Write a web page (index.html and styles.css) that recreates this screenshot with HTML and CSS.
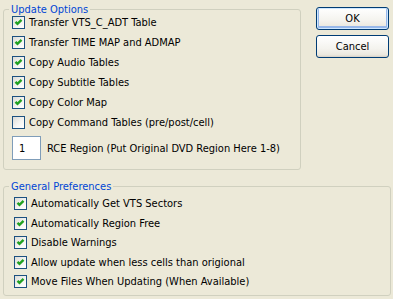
FILE: index.html
```html
<!DOCTYPE html>
<html lang="en">
<head>
  <meta charset="UTF-8">
  <title>Update Options</title>
  <link rel="stylesheet" href="styles.css">
</head>
<body>
  <div class="top">
    <!-- Update options -->
    <fieldset class="group update">
      <legend>Update Options</legend>
      <label class="row"><span class="box on"><svg viewBox="0 0 11 11" width="11" height="11"><path d="M2.5 4.8 L4.5 6.8 L8.5 2.8" /></svg></span>Transfer VTS_C_ADT Table</label>
      <label class="row"><span class="box on"><svg viewBox="0 0 11 11" width="11" height="11"><path d="M2.5 4.8 L4.5 6.8 L8.5 2.8" /></svg></span>Transfer TIME MAP and ADMAP</label>
      <label class="row"><span class="box on"><svg viewBox="0 0 11 11" width="11" height="11"><path d="M2.5 4.8 L4.5 6.8 L8.5 2.8" /></svg></span>Copy Audio Tables</label>
      <label class="row"><span class="box on"><svg viewBox="0 0 11 11" width="11" height="11"><path d="M2.5 4.8 L4.5 6.8 L8.5 2.8" /></svg></span>Copy Subtitle Tables</label>
      <label class="row"><span class="box on"><svg viewBox="0 0 11 11" width="11" height="11"><path d="M2.5 4.8 L4.5 6.8 L8.5 2.8" /></svg></span>Copy Color Map</label>
      <label class="row"><span class="box"></span>Copy Command Tables (pre/post/cell)</label>
      <div class="region">
        <input type="text" class="textbox" value="1">
        <span>RCE Region (Put Original DVD Region Here 1-8)</span>
      </div>
    </fieldset>

    <div class="buttons">
      <button type="button" class="btn default">OK</button>
      <button type="button" class="btn">Cancel</button>
    </div>
  </div>

  <!-- General preferences -->
  <fieldset class="group prefs">
    <legend>General Preferences</legend>
    <label class="row"><span class="box on"><svg viewBox="0 0 11 11" width="11" height="11"><path d="M2.5 4.8 L4.5 6.8 L8.5 2.8" /></svg></span>Automatically Get VTS Sectors</label>
    <label class="row"><span class="box on"><svg viewBox="0 0 11 11" width="11" height="11"><path d="M2.5 4.8 L4.5 6.8 L8.5 2.8" /></svg></span>Automatically Region Free</label>
    <label class="row"><span class="box on"><svg viewBox="0 0 11 11" width="11" height="11"><path d="M2.5 4.8 L4.5 6.8 L8.5 2.8" /></svg></span>Disable Warnings</label>
    <label class="row"><span class="box on"><svg viewBox="0 0 11 11" width="11" height="11"><path d="M2.5 4.8 L4.5 6.8 L8.5 2.8" /></svg></span>Allow update when less cells than origional</label>
    <label class="row"><span class="box on"><svg viewBox="0 0 11 11" width="11" height="11"><path d="M2.5 4.8 L4.5 6.8 L8.5 2.8" /></svg></span>Move Files When Updating (When Available)</label>
  </fieldset>
</body>
</html>
```

FILE: styles.css
```css
body {
  margin: 0;
  padding: 3px 0 0 3px;
  width: 393px;
  height: 299px;
  box-sizing: border-box;
  background-color: #ece9d8;
  font-family: "DejaVu Sans Condensed", "DejaVu Sans", sans-serif;
  font-stretch: condensed;
  font-size: 11px;
  color: #000;
  overflow: hidden;
}
.top {
  display: flex;
  align-items: flex-start;
}
.group {
  margin: 0;
  border: 1px solid #d0d0bf;
  border-radius: 3px;
  box-sizing: border-box;
}
.group legend {
  color: #0046d5;
  line-height: 13px;
  padding: 0 2px;
}
.update {
  width: 298px;
  height: 167px;
  padding: 0 8px;
}
.update legend {
  margin-left: -3px;
}
.update .row {
  height: 20px;
}
.update .row:first-of-type {
  margin-top: -4px;
}
.prefs {
  width: 388px;
  height: 116px;
  margin-top: 10px;
  padding: 1px 10px 0;
}
.prefs legend {
  margin-left: -5px;
}
.prefs .row {
  height: 19.5px;
}
.row {
  display: flex;
  align-items: center;
  gap: 4px;
}
.box {
  width: 13px;
  height: 13px;
  box-sizing: border-box;
  border: 1px solid #1c5180;
  background: linear-gradient(135deg, #dcdcd7 0%, #f6f6f4 60%, #ffffff 100%);
  display: flex;
}
.box svg path {
  fill: none;
  stroke: #21a121;
  stroke-width: 2.4;
}
.region {
  display: flex;
  align-items: center;
  gap: 6px;
  margin-top: 4px;
}
.textbox {
  width: 29px;
  height: 24px;
  box-sizing: border-box;
  border: 1px solid #7f9db9;
  padding: 0 0 0 6px;
  margin: 0;
  font: inherit;
  background: #fff;
}
.buttons {
  display: flex;
  flex-direction: column;
  gap: 5px;
  margin: 4px 0 0 15px;
}
.btn {
  width: 73px;
  height: 23px;
  padding: 0;
  font: inherit;
  color: #000;
  border: 1px solid #003c74;
  border-radius: 3px;
  background: linear-gradient(to bottom, #ffffff 0%, #f4f3ee 60%, #ebe8de 90%, #d6d0c5 100%);
}
.btn.default {
  box-shadow: inset 0 0 0 1px #cee7ff, inset 0 -1px 0 2px #98b8ea;
}
```
